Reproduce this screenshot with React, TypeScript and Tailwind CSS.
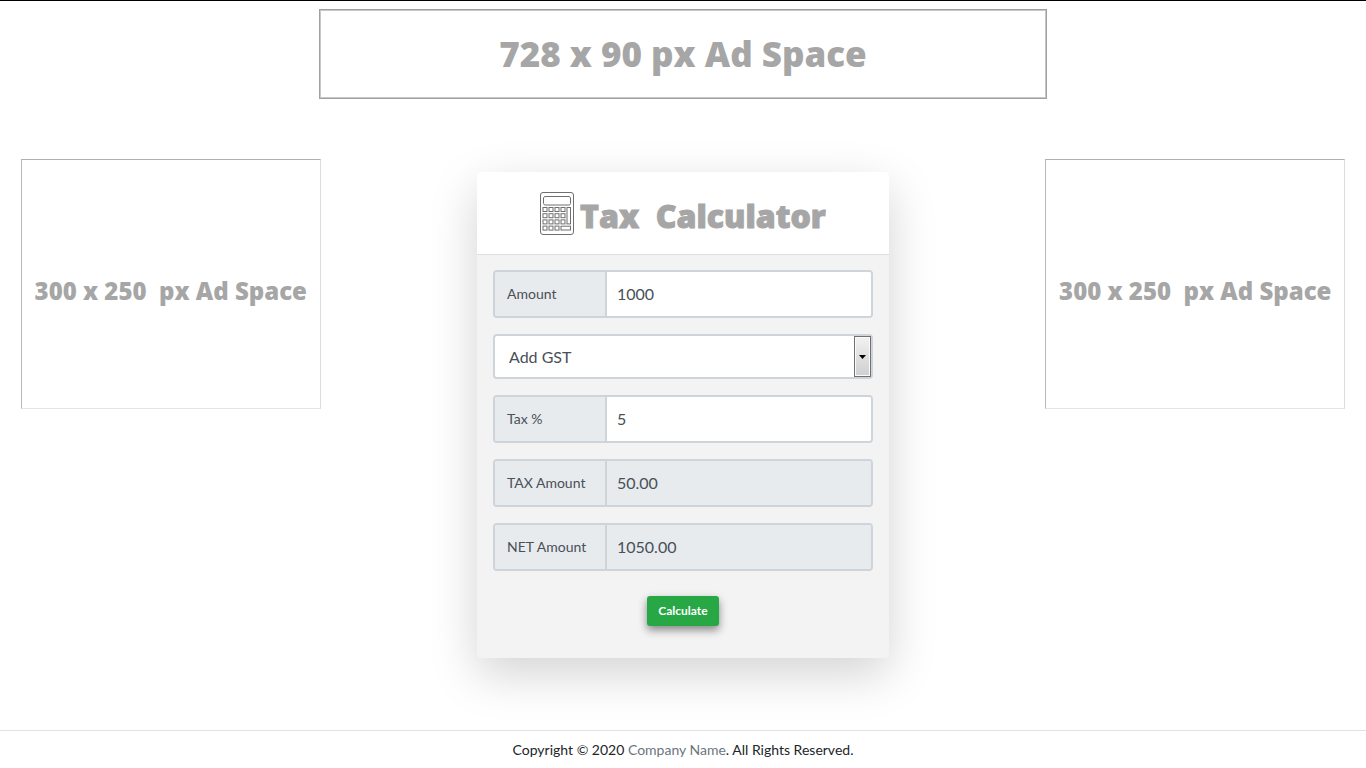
import { useState } from "react"
import type { ReactNode } from "react"

type Mode = "add" | "remove"

interface FieldProps {
  id: string
  label: string
  value: string
  readOnly?: boolean
  onChange?: (value: string) => void
}

function Field({ id, label, value, readOnly, onChange }: FieldProps) {
  return (
    <div className="flex h-12 overflow-hidden rounded border-2 border-[#ced4da]">
      <label
        htmlFor={id}
        className="flex w-[112px] shrink-0 items-center border-r-2 border-[#ced4da] bg-[#e7ebee] px-3 text-sm text-[#495057]"
      >
        {label}
      </label>
      <input
        id={id}
        type="text"
        value={value}
        readOnly={readOnly}
        onChange={(e) => onChange?.(e.target.value)}
        className="min-w-0 flex-1 bg-white px-2.5 text-base text-[#495057] outline-none read-only:bg-[#e7ebee]"
      />
    </div>
  )
}

function CalculatorIcon() {
  const keys = [0, 1, 2, 3].flatMap((row) =>
    [0, 1, 2, 3].filter((col) => !(row === 3 && col === 3)).map((col) => ({ row, col }))
  )

  return (
    <svg width="34" height="43" viewBox="0 0 34 43" fill="none" stroke="#6f6f6f" aria-hidden="true">
      <rect x="0.5" y="0.5" width="33" height="42" rx="2.5" />
      <path d="M4.5 4.5h25l1 1.500v5.500l-1 1.500h-25l-1-1.500V6z" strokeLinejoin="round" />
      {keys.map(({ row, col }) => (
        <rect key={`${row}-${col}`} x={3 + col * 6} y={15.5 + row * 6.2} width="4" height="4" />
      ))}
      <rect x="27" y="15.5" width="3.500" height="16.400" />
      <rect x="21" y="34.2" width="9.500" height="3.800" />
    </svg>
  )
}

function SideAd({ children }: { children: ReactNode }) {
  return (
    <aside className="flex h-[250px] w-[300px] items-center justify-center border border-t-[#b0b0b0] border-r-[#dcdcdc] border-b-[#e4e4e4] border-l-[#b8b8b8] pt-3.5 font-['Open_Sans',sans-serif] text-2xl font-extrabold whitespace-pre text-[#a6a6a6]">
      {children}
    </aside>
  )
}

export default function App() {
  const [amount, setAmount] = useState("1000")
  const [mode, setMode] = useState<Mode>("add")
  const [rate, setRate] = useState("5")
  const [result, setResult] = useState({ tax: "50.00", net: "1050.00" })

  function handleCalculate() {
    const base = Number(amount) || 0
    const percent = Number(rate) || 0
    const tax = mode === "add" ? (base * percent) / 100 : base - base / (1 + percent / 100)
    const net = mode === "add" ? base + tax : base - tax
    setResult({ tax: tax.toFixed(2), net: net.toFixed(2) })
  }

  return (
    <div className="flex min-h-screen flex-col border-t border-black bg-white font-['Lato',sans-serif] text-[#212529]">
      {/* Top banner */}
      <div className="flex justify-center pt-2">
        <aside className="flex h-[90px] w-[728px] items-center justify-center border border-[#a0a0a0] font-['Open_Sans',sans-serif] text-[35px] font-extrabold text-[#a6a6a6] shadow-[inset_0_0_0_1px_#c8c8c8]">
          728 x 90 px Ad Space
        </aside>
      </div>

      <main className="grid flex-1 grid-cols-4 items-start pt-[60px] pb-[72px]">
        <div className="flex justify-center">
          <SideAd>{"300 x 250  px Ad Space"}</SideAd>
        </div>

        <div className="col-span-2 flex justify-center pt-[13px]">
          <form
            onSubmit={(e) => {
              e.preventDefault()
              handleCalculate()
            }}
            className="w-[412px] rounded bg-[#f3f3f3] shadow-[0_16px_48px_rgba(0,0,0,0.175)]"
          >
            <header className="flex h-[83px] items-center justify-center gap-1.5 rounded-t border-b border-[#dfdfdf] bg-white">
              <CalculatorIcon />
              <h1 className="pt-1.5 font-['Open_Sans',sans-serif] text-[32px] font-extrabold whitespace-pre text-[#a6a6a6] [-webkit-text-stroke:1px_#a6a6a6]">
                {"Tax  Calculator"}
              </h1>
            </header>

            <div className="flex flex-col gap-4 px-4 pt-[15px] pb-8">
              <Field id="amount" label="Amount" value={amount} onChange={setAmount} />

              <div className="relative">
                <select
                  aria-label="Calculation type"
                  value={mode}
                  onChange={(e) => setMode(e.target.value as Mode)}
                  className="block h-[45px] w-full appearance-none rounded border-2 border-[#ced4da] bg-white px-3.5 text-base text-[#495057] outline-none"
                >
                  <option value="add">Add GST</option>
                  <option value="remove">Remove GST</option>
                </select>
                <span className="pointer-events-none absolute inset-y-0.5 right-0.5 flex w-[17px] items-center justify-center border border-[#707070] bg-linear-to-b from-[#f2f2f2] to-[#cfcfcf] shadow-[inset_0_0_0_1px_#fafafa]">
                  <svg width="7" height="4" viewBox="0 0 7 4" aria-hidden="true">
                    <path d="M0 0h7L3.5 4z" fill="#000" />
                  </svg>
                </span>
              </div>

              <Field id="rate" label="Tax %" value={rate} onChange={setRate} />
              <Field id="tax-amount" label="TAX Amount" value={result.tax} readOnly />
              <Field id="net-amount" label="NET Amount" value={result.net} readOnly />

              <div className="flex justify-center pt-[9px]">
                <button
                  type="submit"
                  className="h-[30px] rounded-[3px] bg-[#28a745] px-[11px] text-xs font-bold text-white shadow-[0_4px_8px_rgba(0,0,0,0.45)]"
                >
                  Calculate
                </button>
              </div>
            </div>
          </form>
        </div>

        <div className="flex justify-center">
          <SideAd>{"300 x 250  px Ad Space"}</SideAd>
        </div>
      </main>

      <footer className="border-t border-[#dee2e6] pt-[9px] pb-2 text-center text-sm">
        Copyright © 2020{" "}
        <a href="#" className="text-[#6c757d]">
          Company Name
        </a>
        . All Rights Reserved.
      </footer>
    </div>
  )
}
